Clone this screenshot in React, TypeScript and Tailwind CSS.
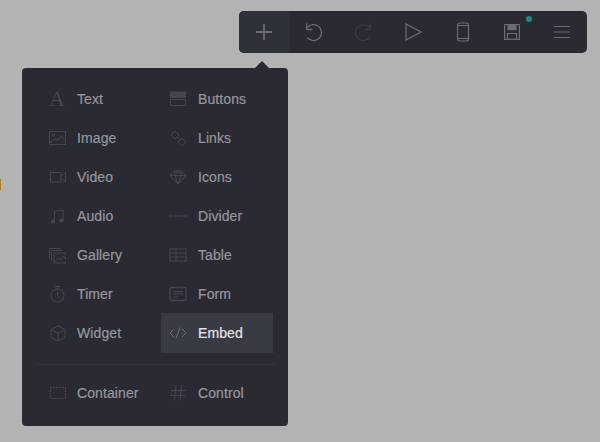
import type { ReactNode } from "react";

const Ico = ({ children, w = 18, h = 18 }: { children: ReactNode; w?: number; h?: number }) => (
  <svg width={w} height={h} viewBox={`0 0 ${w} ${h}`} fill="none" stroke="currentColor" strokeWidth="1">
    {children}
  </svg>
);

const icons: Record<string, ReactNode> = {
  Text: <span className="font-['Liberation_Serif',serif] text-[22px] leading-none">A</span>,
  Image: (
    <Ico>
      <rect x="1.5" y="2.5" width="16" height="13" />
      <circle cx="5.5" cy="6" r="1.2" />
      <path d="M2 14 7.500 9.500l2.500 2L13.500 7l4 4" />
    </Ico>
  ),
  Video: (
    <Ico>
      <rect x="2.5" y="4.500" width="10.500" height="9.500" />
      <path d="m13 8 4.500-3.500v9.500L13 10.500" />
    </Ico>
  ),
  Audio: (
    <Ico>
      <path d="M6.500 14V4.500l8.500-1.500v10" />
      <circle cx="5" cy="14.500" r="1.700" fill="currentColor" />
      <circle cx="13.500" cy="13.500" r="1.700" fill="currentColor" />
    </Ico>
  ),
  Gallery: (
    <Ico>
      <path d="M12.500 2.500h-11v10M14.500 4.500h-11v10" />
      <rect x="6" y="7" width="12" height="10" />
      <path d="m6.500 16 4-4 2 2 3-4 2 3" />
    </Ico>
  ),
  Timer: (
    <Ico>
      <circle cx="9.500" cy="10.500" r="6.500" />
      <path d="M7 1.500h5M9.500 1.500V4M9.500 7v3.500l2.500 2" />
    </Ico>
  ),
  Widget: (
    <Ico>
      <path d="M10 2 17 5.500v8L10 17 3 13.500v-8zM3 5.500l7 4 7-4M10 9.500V17" />
    </Ico>
  ),
  Container: (
    <Ico>
      <rect x="2.500" y="3.500" width="15" height="11" strokeDasharray="1 2" className="text-[#5f6067]" />
    </Ico>
  ),
  Buttons: (
    <Ico>
      <rect x="1" y="1.500" width="16" height="6.500" fill="currentColor" stroke="none" />
      <rect x="1.500" y="9.500" width="15" height="6" />
    </Ico>
  ),
  Links: (
    <Ico>
      <path d="M6 2 10 6 6 10 2 6zM13 9l4 4-4 4-4-4zM8.500 8.500l2 2" />
    </Ico>
  ),
  Icons: (
    <Ico>
      <path d="M5 3h8l4 4.500L9 16 1 7.500zM1 7.500h16M6 7.500 9 16l3-8.500M5 3l1 4.500L9 3l3 4.500L13 3" />
    </Ico>
  ),
  Divider: (
    <Ico>
      <path d="M1 9h16M1 7v4M17 7v4" />
    </Ico>
  ),
  Table: (
    <Ico>
      <rect x="1" y="3" width="16" height="12" />
      <path d="M1 7h16M1 11h16M7 3v12" />
    </Ico>
  ),
  Form: (
    <Ico>
      <rect x="1" y="2.500" width="16" height="13" rx="1.500" strokeWidth="1.300" />
      <path d="M4 6.500h10M4 9h10M4 12h4" />
    </Ico>
  ),
  Embed: (
    <Ico>
      <path d="M5 5 1 9l4 4M13 5l4 4-4 4M11 3.500l-4 11" />
    </Ico>
  ),
  Control: (
    <Ico>
      <path d="M7 1.500 5.500 16.500M12.500 1.500 11 16.500M2 6.500h14.500M1.500 11.500H16" />
    </Ico>
  ),
};

const Item = ({ name, active }: { name: string; active?: boolean }) => (
  <div className={`flex w-[112px] items-center ${active ? "-mt-[1px] h-[40px] bg-[#383a44] pt-[1px]" : "h-[39px]"}`}>
    <div className={`ml-2 flex w-[18px] justify-center ${active ? "text-[#6d6e76]" : "text-[#45464d]"}`}>
      {icons[name]}
    </div>
    <span
      className={`ml-[11px] text-[14px] tracking-[0.1px] [-webkit-text-stroke:0.2px_currentColor] ${
        active ? "text-[#e4e4e7]" : "text-[#96979d]"
      }`}
    >
      {name}
    </span>
  </div>
);

const rows = ["Text", "Buttons", "Image", "Links", "Video", "Icons", "Audio", "Divider", "Gallery", "Table", "Timer", "Form", "Widget", "Embed"];

export default function App() {
  return (
    <div className="relative flex h-[442px] w-[600px] flex-col overflow-hidden bg-[#b3b3b3] font-['Liberation_Sans',Arial,sans-serif]">
      <div className="absolute top-[179px] left-0 h-[11px] w-[1px] bg-[#b8791f]" />
      <div className="mt-[11px] ml-[239px] flex h-[42px] w-[348px] overflow-hidden rounded-[5px] bg-[#292a32] text-[#6b6c72]">
        <div className="flex w-[50px] items-center justify-center bg-[#2e3138] text-[#7c7e83]">
          <svg width="18" height="18" viewBox="0 0 18 18" stroke="currentColor" strokeWidth="1.400">
            <path d="M9 1v16M1 9h16" />
          </svg>
        </div>
        <div className="flex w-[49px] items-center justify-center">
          <svg width="20" height="20" viewBox="0 0 20 20" fill="none" stroke="currentColor" strokeWidth="1.300">
            <path d="M3.300 5.500A8 8 0 1 1 3.500 15.800" />
            <path d="M2.700 1.500v6h5.800" />
          </svg>
        </div>
        <div className="flex w-[50px] items-center justify-center text-[#393a42]">
          <svg width="20" height="20" viewBox="0 0 20 20" fill="none" stroke="currentColor" strokeWidth="1.300">
            <path d="M16.700 5.500A8 8 0 1 0 16.500 15.800" />
            <path d="M17.300 1.500v6h-5.800" />
          </svg>
        </div>
        <div className="flex w-[50px] items-center justify-center">
          <svg width="18" height="20" viewBox="0 0 18 20" fill="none" stroke="currentColor" strokeWidth="1.300">
            <path d="M2 2v16l15-8z" />
          </svg>
        </div>
        <div className="flex w-[49px] items-center justify-center">
          <svg width="14" height="20" viewBox="0 0 14 20" fill="none" stroke="currentColor" strokeWidth="1.200">
            <rect x="1.500" y="1" width="11" height="18" rx="2" />
            <path d="M1.500 3.500h11M1.500 16.500h11" />
          </svg>
        </div>
        <div className="relative flex w-[50px] items-center justify-center">
          <svg width="16" height="16" viewBox="0 0 16 16" fill="none" stroke="currentColor" strokeWidth="1.200">
            <path d="M.6.6h14.800v14.800H.6z" />
            <path d="M4 .6v5h8v-5" fill="currentColor" />
            <path d="M3.500 15.400V9.500h9v5.900" />
          </svg>
          <span className="absolute top-[5px] right-[5px] h-[6px] w-[6px] rounded-full bg-[#0d8f86]" />
        </div>
        <div className="flex w-[50px] items-center justify-center">
          <svg width="18" height="14" viewBox="0 0 18 14" stroke="currentColor" strokeWidth="1.200">
            <path d="M1 1.500h16M1 7h16M1 12.500h16" />
          </svg>
        </div>
      </div>
      <div className="relative mt-[15px] ml-[22px] h-[358px] w-[266px] rounded-[4px] bg-[#292a32] pt-[11.500px] pl-[18px]">
        <div className="absolute -top-[7px] left-[233px] h-0 w-0 border-r-[7px] border-b-[7px] border-l-[7px] border-r-transparent border-b-[#292a32] border-l-transparent" />
        <div className="grid grid-cols-[112px_112px] gap-x-[9px]">
          {rows.map((r) => (
            <Item key={r} name={r} active={r === "Embed"} />
          ))}
        </div>
        <div className="mt-[11px] mr-[12px] -ml-[5px] border-t border-[#30313a]" />
        <div className="mt-[9px] grid grid-cols-[112px_112px] gap-x-[9px]">
          <Item name="Container" />
          <Item name="Control" />
        </div>
      </div>
    </div>
  );
}
